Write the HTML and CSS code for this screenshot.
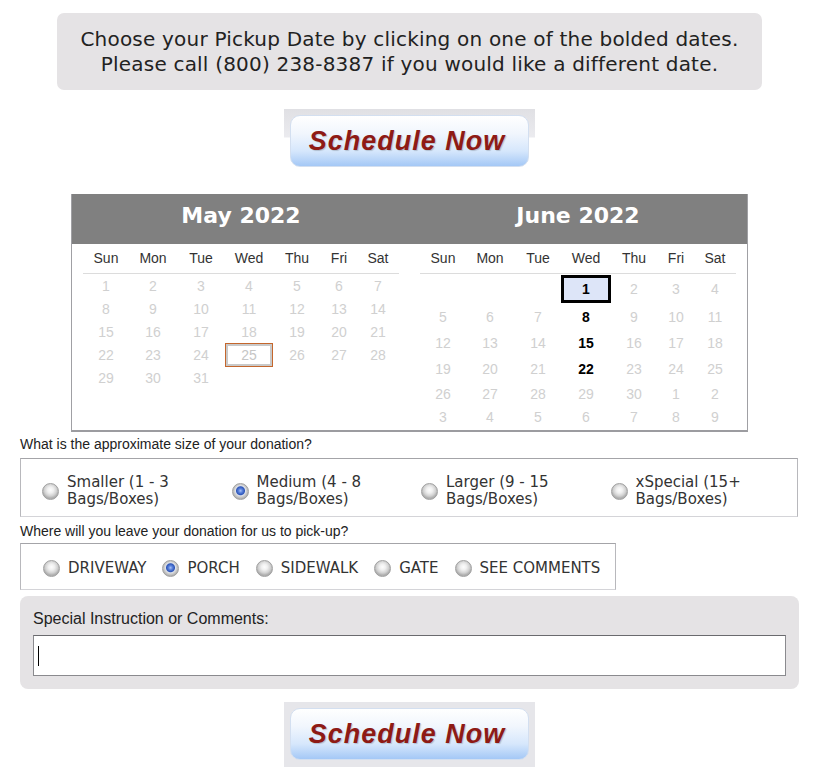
FILE: index.html
```html
<!DOCTYPE html>
<html lang="en">
<head>
    <meta charset="UTF-8">
    <meta name="viewport" content="width=device-width, initial-scale=1.0">
    <title>Schedule a Pickup</title>
    <link rel="stylesheet" href="styles.css">
</head>
<body>
    <div class="page">
        <div class="notice">
            Choose your Pickup Date by clicking on one of the bolded dates.<br>
            Please call (800) 238-8387 if you would like a different date.
        </div>

        <div class="btn-wrap btn-wrap-top">
            <button class="schedule-btn" type="button">Schedule Now</button>
        </div>

        <div class="calendar">
            <div class="month">
                <div class="month-title">May 2022</div>
                <table>
                    <tr><th>Sun</th><th>Mon</th><th>Tue</th><th>Wed</th><th>Thu</th><th>Fri</th><th>Sat</th></tr>
                    <tr><td>1</td><td>2</td><td>3</td><td>4</td><td>5</td><td>6</td><td>7</td></tr>
                    <tr><td>8</td><td>9</td><td>10</td><td>11</td><td>12</td><td>13</td><td>14</td></tr>
                    <tr><td>15</td><td>16</td><td>17</td><td>18</td><td>19</td><td>20</td><td>21</td></tr>
                    <tr><td>22</td><td>23</td><td>24</td><td><span class="today">25</span></td><td>26</td><td>27</td><td>28</td></tr>
                    <tr><td>29</td><td>30</td><td>31</td><td></td><td></td><td></td><td></td></tr>
                </table>
            </div>
            <div class="month">
                <div class="month-title">June 2022</div>
                <table>
                    <tr><th>Sun</th><th>Mon</th><th>Tue</th><th>Wed</th><th>Thu</th><th>Fri</th><th>Sat</th></tr>
                    <tr><td></td><td></td><td></td><td><a class="open selected" href="#">1</a></td><td>2</td><td>3</td><td>4</td></tr>
                    <tr><td>5</td><td>6</td><td>7</td><td><a class="open" href="#">8</a></td><td>9</td><td>10</td><td>11</td></tr>
                    <tr><td>12</td><td>13</td><td>14</td><td><a class="open" href="#">15</a></td><td>16</td><td>17</td><td>18</td></tr>
                    <tr><td>19</td><td>20</td><td>21</td><td><a class="open" href="#">22</a></td><td>23</td><td>24</td><td>25</td></tr>
                    <tr><td>26</td><td>27</td><td>28</td><td>29</td><td>30</td><td>1</td><td>2</td></tr>
                    <tr><td>3</td><td>4</td><td>5</td><td>6</td><td>7</td><td>8</td><td>9</td></tr>
                </table>
            </div>
        </div>

        <div class="question">What is the approximate size of your donation?</div>
        <div class="size-box">
            <label class="opt"><input type="radio" name="size">Smaller (1 - 3<br>Bags/Boxes)</label>
            <label class="opt"><input type="radio" name="size" checked>Medium (4 - 8<br>Bags/Boxes)</label>
            <label class="opt"><input type="radio" name="size">Larger (9 - 15<br>Bags/Boxes)</label>
            <label class="opt"><input type="radio" name="size">xSpecial (15+<br>Bags/Boxes)</label>
        </div>

        <div class="question question-place">Where will you leave your donation for us to pick-up?</div>
        <div class="place-box">
            <label class="opt"><input type="radio" name="place">DRIVEWAY</label>
            <label class="opt"><input type="radio" name="place" checked>PORCH</label>
            <label class="opt"><input type="radio" name="place">SIDEWALK</label>
            <label class="opt"><input type="radio" name="place">GATE</label>
            <label class="opt"><input type="radio" name="place">SEE COMMENTS</label>
        </div>

        <div class="comments">
            <label class="comments-label" for="comments">Special Instruction or Comments:</label>
            <input class="comments-input" id="comments" type="text" autofocus>
        </div>

        <div class="btn-wrap btn-wrap-bottom">
            <button class="schedule-btn" type="button">Schedule Now</button>
        </div>
    </div>
</body>
</html>
```

FILE: styles.css
```css
body {
    margin: 0;
    background: #fff;
    font-family: "Liberation Sans", Arial, sans-serif;
    color: #222;
}
.page {
    width: 779px;
    padding: 13px 0 0 20px;
}
.notice {
    margin: 0 37px;
    padding: 14px 0 13px;
    background: #e5e3e5;
    border-radius: 7px;
    text-align: center;
    font: 20px/25px "DejaVu Sans", Verdana, sans-serif;
    letter-spacing: 0.2px;
    color: #222;
}

/* schedule buttons */
.btn-wrap {
    width: 251px;
    box-sizing: border-box;
    margin: 19px auto 0;
    padding: 6px 6px 0;
}
.btn-wrap-top {
    background: linear-gradient(#e0e0e4 0, #ebebef 28px, #fff 29px);
}
.btn-wrap-bottom {
    margin-top: 13px;
    padding-bottom: 7px;
    background: #e6e6ea;
}
.schedule-btn {
    display: block;
    width: 239px;
    height: 52px;
    padding: 0 5px 0 0;
    border: 1px solid #d3dff0;
    border-radius: 10px;
    background: linear-gradient(#ffffff 0%, #f1f6fd 35%, #d6e7fc 70%, #a4c8f6 100%);
    font: italic bold 27px "Liberation Sans", Arial, sans-serif;
    letter-spacing: 1px;
    color: #8e1a15;
    text-shadow: 1px 1px 1px rgba(0,0,0,0.18);
    cursor: pointer;
}

/* calendar */
.calendar {
    display: flex;
    gap: 21px;
    width: 677px;
    box-sizing: border-box;
    margin: 27px 0 0 51px;
    padding: 0 11px 2px;
    border: 1px solid #a0a0a4;
    border-top: 0;
    border-bottom: 2px solid #9c9ca0;
    background: linear-gradient(#808080 50px, #fff 50px);
}
.month {
    width: 316px;
}
.month-title {
    height: 50px;
    box-sizing: border-box;
    padding-bottom: 6px;
    text-align: center;
    font: bold 22px/44px "DejaVu Sans", Verdana, sans-serif;
    color: #fff;
}
.month table {
    width: 316px;
    border-collapse: collapse;
    table-layout: fixed;
}
.month th {
    height: 28px;
    padding: 0 0 1px;
    border-bottom: 1px solid #dcdcdc;
    font-weight: normal;
    font-size: 14px;
    color: #333;
}
.month th:nth-child(1) { width: 46px; }
.month th:nth-child(6) { width: 36px; }
.month th:nth-child(7) { width: 42px; }
.month td {
    height: 23px;
    padding: 0;
    text-align: center;
    font-size: 14px;
    color: #d0d0d0;
}
.today {
    display: block;
    height: 18px;
    line-height: 18px;
    margin: 0 1px;
    border: 2px solid #c9c9c9;
    outline: 1px solid #c4662c;
    color: #c6c6c6;
}
.open {
    display: block;
    line-height: 26px;
    font-weight: bold;
    color: #000;
    text-decoration: none;
}
.open.selected {
    line-height: 22px;
    margin: 1px -1px 1px -1px;
    border: 3px solid #000;
    background: #dde5f8;
}

/* donation questions */
.question {
    padding: 2px 0 4px;
    font-size: 14px;
    line-height: 20px;
    color: #222;
}
.question-place {
    padding: 4px 0 2px;
}
.size-box {
    display: grid;
    grid-template-columns: repeat(4, 189.5px);
    width: 778px;
    box-sizing: border-box;
    padding: 15px 0 8px 21px;
    border: 1px solid #b8b8bc;
    border-top-color: #a4a4a8;
    border-bottom-color: #d4d4d8;
}
.place-box {
    display: inline-flex;
    gap: 16px;
    padding: 16px 15px 12px 22px;
    border: 1px solid #b8b8bc;
    border-top-color: #a4a4a8;
    border-bottom-color: #d4d4d8;
}
.opt {
    display: flex;
    align-items: center;
    gap: 8px;
    font: 15px/17px "DejaVu Sans", Verdana, sans-serif;
    color: #333;
}
.opt input {
    appearance: none;
    flex-shrink: 0;
    width: 17px;
    height: 17px;
    margin: 0;
    border: 1px solid #a0a0a0;
    border-radius: 50%;
    background: radial-gradient(circle at 50% 40%, #fdfdfd 0, #f0f0f0 3px, #d2d2d2 6px, #b0b0b0 8px);
}
.opt input:checked {
    background: radial-gradient(circle at 50% 45%, #a9c2f5 0, #5a82dc 2px, #2f56b8 4px, #dfe3ea 5px, #d0d0d0 6px, #b0b0b0 8px);
}

/* comments */
.comments {
    margin-top: 6px;
    padding: 13px 13px 13px;
    background: #e5e3e5;
    border-radius: 8px;
}
.comments-label {
    display: block;
    font-size: 16px;
    line-height: 20px;
    color: #222;
}
.comments-input {
    display: block;
    width: 100%;
    height: 41px;
    box-sizing: border-box;
    margin-top: 6px;
    padding: 0 5px;
    border: 1px solid #8a8a8e;
    border-top-color: #6a6a6e;
    /* caret of the focused field */
    background: linear-gradient(#000, #000) no-repeat 4px 50% / 1px 20px, #fff;
    font-size: 16px;
    outline: none;
    caret-color: #000;
}
```
